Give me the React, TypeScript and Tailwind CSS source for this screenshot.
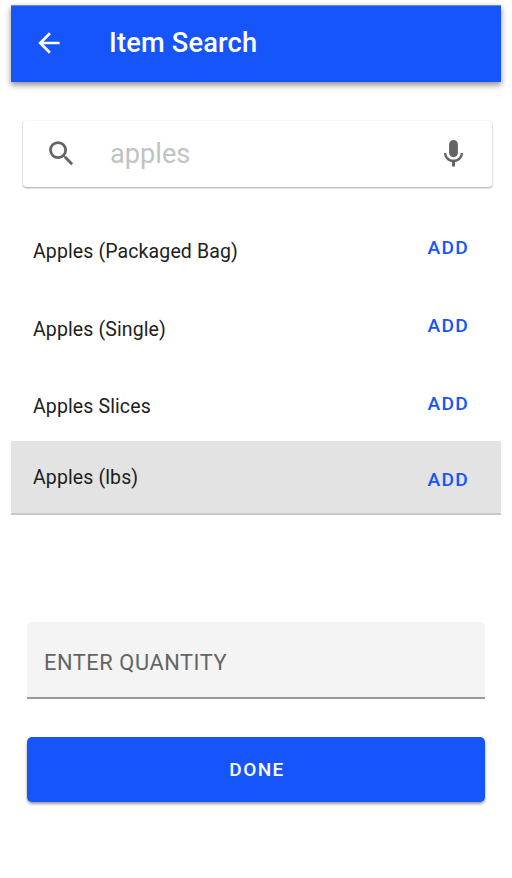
import React from "react";

const items = ["Apples (Packaged Bag)", "Apples (Single)", "Apples Slices"];

export default function App() {
  return (
    <main className="h-[878px] w-[512px] overflow-hidden bg-white pt-[5px] font-['Roboto',sans-serif] text-[#212121]">
      <header className="ml-[11px] flex h-[77px] w-[490px] items-center border-t border-[#5f8af0] bg-[#1555fa] pl-[22px] text-white shadow-[0_3px_6px_rgba(0,0,0,0.45)]">
        <svg className="mb-[2px] size-8" viewBox="0 0 24 24" fill="currentColor"><path d="M20 11H7.83l5.59-5.59L12 4l-8 8 8 8 1.41-1.41L7.83 13H20v-2z" /></svg>
        <h1 className="mb-[3px] ml-[44px] text-[27.2px] leading-8 font-medium tracking-[0.2px]">Item Search</h1>
      </header>
      <div className="mt-[39px] ml-[23px] flex h-[66px] w-[469px] items-center rounded-[3px] bg-white pr-[22px] pl-[22px] shadow-[0_1px_2px_rgba(0,0,0,0.35),0_0_1px_rgba(0,0,0,0.2)]">
        <svg className="mb-[1px] size-[33px] text-[#646464]" viewBox="0 0 24 24" fill="currentColor"><path d="M15.5 14h-.79l-.28-.27A6.471 6.471 0 0 0 16 9.5 6.5 6.5 0 1 0 9.5 16c1.61 0 3.09-.59 4.23-1.57l.27.28v.79l5 4.99L20.49 19l-4.99-5zm-6 0C7.01 14 5 11.99 5 9.5S7.01 5 9.5 5 14 7.01 14 9.5 11.99 14 9.5 14z" /></svg>
        <span className="ml-[32px] flex-1 text-[27.2px] text-[#c2c2c2]">apples</span>
        <svg className="mb-[1px] size-[33px] text-[#646464]" viewBox="0 0 24 24" fill="currentColor"><path d="M12 14.7c1.8 0 3.2-1.4 3.2-3.2V5.4a3.2 3.2 0 0 0-6.4 0v6.1c0 1.8 1.4 3.2 3.2 3.2zm5.2-3.1c0 2.9-2.3 4.8-5.2 4.8s-5.2-1.9-5.2-4.8H5.1c0 3.4 2.5 6.1 5.8 6.6v3.2h2.2v-3.2c3.3-.5 5.8-3.2 5.8-6.6h-1.7z" /></svg>
      </div>
      <ul className="mt-[25px] h-[229px]">
        {items.map((item) => (
          <li key={item} className="flex h-[77.6px] items-center justify-between pr-[43px] pl-[33px]">
            <span className="mt-[2px] text-[19.5px] tracking-[0.12px]">{item}</span>
            <button className="mb-[4px] text-[19.2px] font-medium tracking-[1.25px] text-[#1555fa]">ADD</button>
          </li>
        ))}
      </ul>
      <div className="ml-[11px] flex h-[74px] w-[490px] items-center justify-between border-b-2 border-[#c8c8c8] bg-[#e3e3e3] pr-[32px] pl-[22px]">
        <span className="mt-[1px] text-[19.5px] tracking-[0.12px]">Apples (lbs)</span>
        <button className="mt-[7px] text-[19.2px] font-medium tracking-[1.25px] text-[#1555fa]">ADD</button>
      </div>
      <div className="mt-[107px] ml-[27px] flex h-[77px] w-[458px] items-center rounded-t-[5px] border-b-2 border-[#999] bg-[#f4f4f4] pt-[8px] pl-[17px] text-[21.8px] tracking-[0.58px] text-[#646464]">ENTER QUANTITY</div>
      <button className="mt-[38px] ml-[27px] flex h-[65px] w-[458px] items-center justify-center rounded-[5px] bg-[#1555fa] pt-[2px] pl-[2px] text-[19px] font-medium tracking-[1.4px] text-white shadow-[0_2px_3px_rgba(0,0,0,0.4)]">DONE</button>
    </main>
  );
}
